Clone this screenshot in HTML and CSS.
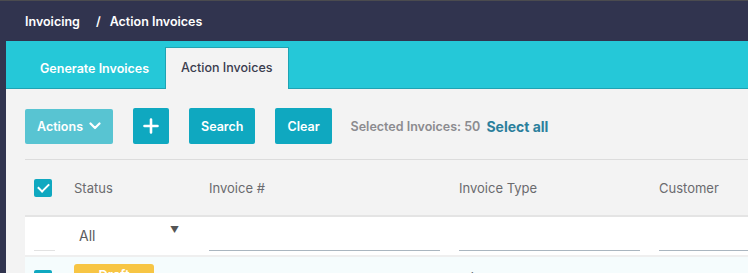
FILE: index.html
```html
<!DOCTYPE html>
<html lang="en">
<head>
    <meta charset="UTF-8">
    <title>Action Invoices</title>
    <link rel="stylesheet" href="styles.css">
</head>
<body>
    <header class="top-bar">
        <span class="crumb">Invoicing</span>
        <span class="crumb-sep">/</span>
        <span class="crumb">Action Invoices</span>
    </header>

    <div class="page">
        <nav class="tabs">
            <a class="tab">Generate Invoices</a>
            <a class="tab tab-active">Action Invoices</a>
        </nav>

        <div class="toolbar">
            <button class="btn btn-light">Actions
                <svg class="chevron" viewBox="0 0 12 8" width="12" height="8"><path d="M1.5 1.5 L6 6 L10.5 1.5" fill="none" stroke="#fff" stroke-width="2.2" stroke-linecap="round" stroke-linejoin="round"/></svg>
            </button>
            <button class="btn btn-icon">
                <svg viewBox="0 0 16 16" width="16" height="16"><path d="M8 1.5 V14.5 M1.5 8 H14.5" stroke="#fff" stroke-width="2.6" stroke-linecap="round"/></svg>
            </button>
            <button class="btn">Search</button>
            <button class="btn">Clear</button>
            <span class="selected-count">Selected Invoices: 50</span>
            <a class="select-all">Select all</a>
        </div>

        <div class="table">
            <div class="row head-row">
                <div class="cell"><span class="check checked"></span></div>
                <div class="cell">Status</div>
                <div class="cell">Invoice #</div>
                <div class="cell">Invoice Type</div>
                <div class="cell">Customer</div>
            </div>
            <div class="row filter-row">
                <div class="cell"><span class="blank-line"></span></div>
                <div class="cell"><span class="select">All <span class="caret">&#9660;</span></span></div>
                <div class="cell"><span class="input-line"></span></div>
                <div class="cell"><span class="input-line"></span></div>
                <div class="cell"><span class="input-line"></span></div>
            </div>
            <div class="row data-row">
                <div class="cell"><span class="check checked"></span></div>
                <div class="cell"><span class="badge">Draft</span></div>
                <div class="cell"><a class="link-dark">TB000550</a></div>
                <div class="cell">Miscellaneous</div>
                <div class="cell"><a class="link">Imported 1</a></div>
            </div>
        </div>
    </div>
</body>
</html>
```

FILE: styles.css
```css
body {
    margin: 0;
    background: #31344f;
    font-family: Inter, "Noto Sans", sans-serif;
    font-size: 13px;
    overflow: hidden;
}

.top-bar {
    height: 40px;
    border-top: 1px solid #4b4b4f;
    display: flex;
    align-items: center;
    padding-left: 25px;
    color: #fff;
    font-weight: 600;
    font-size: 12.5px;
}

.crumb-sep {
    margin: 0 9px 0 16px;
}

.page {
    margin-left: 6px;
    background: #f3f3f3;
    min-height: 240px;
}

/* tabs band */
.tabs {
    height: 47px;
    background: #25c8d8;
    border-bottom: 1px solid #1fa3b3;
    display: flex;
    align-items: flex-end;
    padding-left: 19px;
}

.tab {
    padding: 0 15px 0 15px;
    height: 41px;
    line-height: 41px;
    color: #fff;
    font-weight: 600;
    font-size: 12.5px;
    position: relative;
    top: 1px;
}

.tab-active {
    background: #f3f3f3;
    color: #3a3c4e;
    font-weight: 500;
    border: 1px solid #1fa3b3;
    border-bottom: none;
    height: 41px;
    line-height: 40px;
    padding: 0 15px 0 15px;
    margin-left: 1px;
}

/* toolbar */
.toolbar {
    display: flex;
    align-items: center;
    gap: 20px;
    margin: 0 0 0 19px;
    padding: 19px 0 15px;
    border-bottom: 1px solid #dcdcdc;
}

.btn {
    height: 36px;
    border: none;
    border-radius: 2px;
    background: #0fa8c0;
    color: #fff;
    font-family: inherit;
    font-size: 12.5px;
    font-weight: 600;
    padding: 0 12px;
    display: flex;
    align-items: center;
    gap: 6px;
}

.btn-light {
    background: #58c4d2;
    height: 35px;
}

.btn-icon {
    width: 36px;
    justify-content: center;
    padding: 0;
}

.selected-count {
    color: #8b8b8f;
    font-weight: 600;
    font-size: 12.5px;
    margin-left: -1px;
}

.select-all {
    color: #2b7f9c;
    font-weight: 700;
    font-size: 14px;
    margin-left: -14px;
}

/* table */
.table {
    margin-left: 19px;
}

.row {
    display: grid;
    grid-template-columns: 49px 135px 250px 200px 1fr;
    align-items: center;
}

.cell {
    padding-right: 19px;
}

.cell:first-child {
    padding-left: 9px;
    padding-right: 0;
}

.cell:last-child {
    padding-right: 0;
}

.head-row {
    height: 55px;
    color: #6a6a6e;
    font-size: 13px;
    border-bottom: 2px solid #e4e4e4;
}

.check {
    display: block;
    width: 18px;
    height: 18px;
    border-radius: 2px;
    background: #0fa8c0;
    position: relative;
}

.check.checked::after {
    content: "";
    position: absolute;
    left: 4px;
    top: 4px;
    width: 9px;
    height: 5px;
    border-left: 2px solid #fff;
    border-bottom: 2px solid #fff;
    transform: rotate(-45deg);
}

.filter-row {
    background: #fff;
    height: 38px;
    align-items: end;
    border-bottom: 2px solid #efefef;
}

.blank-line {
    display: block;
    width: 21px;
    border-bottom: 1px solid #e2e2e2;
    margin-bottom: 4px;
}

.select {
    display: flex;
    justify-content: space-between;
    width: 100px;
    margin-left: 5px;
    color: #5c5c60;
    font-size: 14px;
    margin-bottom: 11px;
}

.caret {
    font-size: 9px;
    color: #555;
    position: relative;
    top: -3px;
}

.input-line {
    display: block;
    border-bottom: 1px solid #aab6c0;
    margin-bottom: 4px;
}

.data-row {
    background: #f5fcfd;
    height: 40px;
    align-items: start;
    padding-top: 7px;
    color: #333;
    font-size: 13px;
}

.data-row .check {
    margin-top: 3px;
}

.badge {
    display: block;
    width: 80px;
    height: 22px;
    background: #f7c544;
    border-radius: 3px;
    color: #fff;
    text-align: center;
    line-height: 22px;
    font-weight: 600;
}

.data-row .cell {
    padding-top: 6px;
}

.data-row .cell:nth-child(2) {
    padding-top: 0;
}

.data-row .cell:first-child {
    padding-top: 3px;
}

.link-dark {
    color: #1b5f80;
}

.link {
    color: #1a86a8;
}
```
